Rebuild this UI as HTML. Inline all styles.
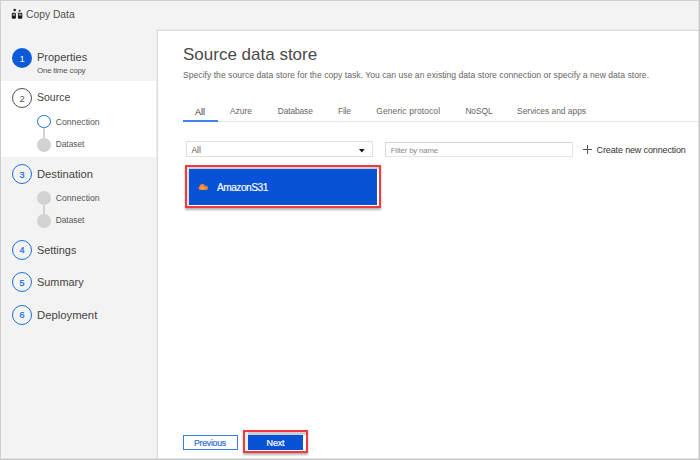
<!DOCTYPE html>
<html><head><meta charset="utf-8">
<style>
*{box-sizing:border-box;margin:0;padding:0}
html,body{width:700px;height:460px;overflow:hidden;background:#f3f3f3;font-family:"Liberation Sans",sans-serif;color:#333}
.abs{position:absolute}
.t{position:absolute;white-space:nowrap;line-height:1}
.circ{position:absolute;border-radius:50%;box-sizing:border-box}
.num{position:absolute;width:20px;text-align:center;line-height:1;font-size:9px;font-weight:normal;-webkit-text-stroke:0.25px currentColor}
.lbl{font-size:11px;color:#444}
.sub{font-size:8.6px;color:#555}
.disc{position:absolute;left:37px;width:14px;height:14px;border-radius:50%;background:#d2d2d2}
.vline{position:absolute;left:43.2px;width:1.4px;background:#d2d2d2}
.tab{position:absolute;top:107.1px;font-size:8.4px;color:#666;line-height:1;white-space:nowrap}
</style></head><body>
<!-- frame borders -->
<div class="abs" style="left:0;top:0;width:700px;height:1px;background:#cfcfcf"></div>
<div class="abs" style="left:0;top:0;width:1px;height:460px;background:#cfcfcf"></div>
<div class="abs" style="left:699px;top:0;width:1px;height:460px;background:#c6c6c6"></div>
<div class="abs" style="left:698px;top:0;width:1px;height:460px;background:#e2e2e2"></div>
<div class="abs" style="left:0;top:459px;width:700px;height:1px;background:#c6c6c6"></div>
<div class="abs" style="left:0;top:458px;width:699px;height:1px;background:#e2e2e2"></div>

<!-- title -->
<svg class="abs" style="left:11px;top:8px" width="13" height="12" viewBox="0 0 13 12">
<circle cx="3.7" cy="2" r="1.25" fill="#1a1a1a"/><circle cx="8.6" cy="2.7" r="1.05" fill="#333"/><circle cx="6.2" cy="4.6" r="0.7" fill="#aaa"/>
<rect x="0.8" y="4.8" width="4.1" height="5.9" rx="1" fill="#1a1a1a"/>
<rect x="1.6" y="5.6" width="2.5" height="2.1" fill="#9a9a9a"/>
<rect x="6.9" y="4.8" width="4.4" height="5.9" rx="1" fill="#1a1a1a"/>
<rect x="7.7" y="5.6" width="2.8" height="2.1" fill="#9a9a9a"/>
</svg>
<div class="t" style="left:26px;top:10.2px;font-size:10.3px;color:#505050">Copy Data</div>

<!-- sidebar white source section -->
<div class="abs" style="left:1px;top:81.4px;width:156px;height:76px;background:#fff"></div>
<!-- sidebar right line -->
<div class="abs" style="left:156px;top:30px;width:1px;height:428px;background:#ebebeb"></div>
<div class="abs" style="left:157px;top:30px;width:1px;height:428px;background:#dcdcdc"></div>

<!-- step 1 -->
<div class="circ" style="left:12px;top:48px;width:20px;height:20px;background:#0b5bd9"></div>
<div class="num" style="left:12px;top:54.3px;color:#fff;-webkit-text-stroke:0;font-size:9.4px">1</div>
<div class="t lbl" style="left:37px;top:52px">Properties</div>
<div class="t" style="left:37px;top:66.8px;font-size:8px;letter-spacing:-0.25px;color:#555">One time copy</div>

<!-- step 2 -->
<div class="circ" style="left:12px;top:87.6px;width:20px;height:20px;border:1.6px solid #505050"></div>
<div class="num" style="left:12px;top:93.8px;color:#555;-webkit-text-stroke:0;font-size:9.4px">2</div>
<div class="t lbl" style="left:37px;top:92px;font-size:10.5px">Source</div>
<div class="circ" style="left:37px;top:114.6px;width:13.8px;height:13.8px;border:1.7px solid #1a6fe0"></div>
<div class="vline" style="top:128.3px;height:10px"></div>
<div class="disc" style="top:138px;width:13.8px;height:13.8px"></div>
<div class="t sub" style="left:55.7px;top:117.5px;font-size:8.7px">Connection</div>
<div class="t sub" style="left:55.7px;top:140px;font-size:8.35px">Dataset</div>

<!-- step 3 -->
<div class="circ" style="left:12px;top:164.2px;width:20px;height:20px;border:1.7px solid #1a6fe0"></div>
<div class="num" style="left:12px;top:170.6px;color:#1a6fe0">3</div>
<div class="t lbl" style="left:37px;top:168.6px;font-size:11.2px">Destination</div>
<div class="disc" style="top:191px;width:13.8px;height:13.8px"></div>
<div class="vline" style="top:204.6px;height:10px"></div>
<div class="disc" style="top:214.2px;width:13.8px;height:13.8px"></div>
<div class="t sub" style="left:55.7px;top:194.3px;font-size:8.7px">Connection</div>
<div class="t sub" style="left:55.7px;top:216px;font-size:8.35px">Dataset</div>

<!-- step 4-6 -->
<div class="circ" style="left:12px;top:240px;width:20px;height:20px;border:1.7px solid #1a6fe0"></div>
<div class="num" style="left:12px;top:246.4px;color:#1a6fe0">4</div>
<div class="t lbl" style="left:37px;top:244.9px;font-size:10.9px">Settings</div>
<div class="circ" style="left:12px;top:272.4px;width:20px;height:20px;border:1.7px solid #1a6fe0"></div>
<div class="num" style="left:12px;top:278.8px;color:#1a6fe0">5</div>
<div class="t lbl" style="left:37px;top:277px;font-size:10.9px">Summary</div>
<div class="circ" style="left:12px;top:305px;width:20px;height:20px;border:1.7px solid #1a6fe0"></div>
<div class="num" style="left:12px;top:311.4px;color:#1a6fe0">6</div>
<div class="t lbl" style="left:37px;top:309.7px;font-size:11.3px">Deployment</div>

<!-- main panel -->
<div class="abs" style="left:158px;top:31px;width:540px;height:427px;background:#fff"></div>
<div class="abs" style="left:157px;top:30px;width:541px;height:1px;background:#dcdcdc"></div>
<div class="abs" style="left:156px;top:29px;width:542px;height:1px;background:#ebebeb"></div>

<div class="t" style="left:183px;top:46.3px;font-size:17px;color:#4a4a4a">Source data store</div>
<div class="t" style="left:183px;top:71.2px;font-size:8.6px;letter-spacing:0.018px;color:#666">Specify the source data store for the copy task. You can use an existing data store connection or specify a new data store.</div>

<!-- tabs -->
<div class="tab" style="left:195px;top:107.5px;color:#333;font-size:9px">All</div>
<div class="tab" style="left:230px">Azure</div>
<div class="tab" style="left:277.7px;letter-spacing:-0.1px">Database</div>
<div class="tab" style="left:338px;letter-spacing:-0.2px">File</div>
<div class="tab" style="left:376.3px;letter-spacing:0.15px">Generic protocol</div>
<div class="tab" style="left:465.4px;letter-spacing:-0.07px">NoSQL</div>
<div class="tab" style="left:517.1px">Services and apps</div>
<div class="abs" style="left:183px;top:121px;width:515px;height:1px;background:#e6e6e6"></div>
<div class="abs" style="left:183px;top:120px;width:35px;height:2px;background:#4382e6"></div>

<!-- dropdown -->
<div class="abs" style="left:185.5px;top:141px;width:187.6px;height:16px;border:1px solid #e0e0e0"></div>
<div class="t" style="left:191.4px;top:146.2px;font-size:8.5px;color:#555">All</div>
<svg class="abs" style="left:359.2px;top:148.7px" width="6" height="4" viewBox="0 0 6 4"><path d="M0 0h5.6l-2.8 3.4z" fill="#111"/></svg>

<!-- filter -->
<div class="abs" style="left:385px;top:142px;width:187.5px;height:14.5px;border:1px solid #d6d6d6;border-bottom-color:#e4e4e4;border-right-color:#e4e4e4"></div>
<div class="t" style="left:390.7px;top:146.8px;font-size:7.8px;letter-spacing:-0.15px;color:#888">Filter by name</div>

<!-- create new -->
<div class="abs" style="left:583px;top:149.2px;width:9.4px;height:1px;background:#555"></div>
<div class="abs" style="left:587.2px;top:145px;width:1px;height:9.3px;background:#555"></div>
<div class="t" style="left:596.6px;top:145.6px;font-size:9px;letter-spacing:-0.14px;color:#333">Create new connection</div>

<!-- Amazon tile -->
<div class="abs" style="left:185px;top:165px;width:196px;height:43px;border:2px solid #f03a3c;box-shadow:0 1.5px 2px rgba(0,0,0,0.3)"></div>
<div class="abs" style="left:187px;top:167px;width:192px;height:2px;background:#cfcfcf"></div>
<div class="abs" style="left:187px;top:167px;width:2px;height:39px;background:#e2e2e2"></div>
<div class="abs" style="left:189px;top:169px;width:188px;height:35.6px;background:#0752d6"></div>
<svg class="abs" style="left:198px;top:183px" width="11" height="8" viewBox="0 0 11 8">
<circle cx="4.3" cy="3.7" r="2.6" fill="#f7892b"/><circle cx="2.7" cy="5" r="2" fill="#f7892b"/><circle cx="7.8" cy="4.9" r="2.1" fill="#f7892b"/><rect x="2.7" y="4.5" width="5.1" height="2.5" fill="#f7892b"/>
<ellipse cx="4.8" cy="5" rx="1.8" ry="1.1" fill="#fbae6b"/>
</svg>
<div class="t" style="left:216.9px;top:183.4px;font-size:10.2px;letter-spacing:-0.5px;color:#fff;-webkit-text-stroke:0.15px #fff">AmazonS31</div>

<!-- buttons -->
<div class="abs" style="left:183px;top:435px;width:55px;height:15px;border:1px solid #3b7de0"></div>
<div class="t" style="left:194px;top:438.6px;font-size:8.8px;letter-spacing:-0.3px;color:#2f6fd8;-webkit-text-stroke:0.2px #2f6fd8">Previous</div>

<div class="abs" style="left:243px;top:430px;width:65px;height:23px;border:2px solid #f03a3c;box-shadow:0 1.5px 2px rgba(0,0,0,0.3)"></div>
<div class="abs" style="left:245px;top:432px;width:61px;height:2.5px;background:#cfcfcf"></div>
<div class="abs" style="left:245px;top:432px;width:2.5px;height:19px;background:#eceeec"></div>
<div class="abs" style="left:247.7px;top:434.8px;width:55.3px;height:15px;background:#0752d6"></div>
<div class="t" style="left:266.6px;top:438.7px;font-size:9px;letter-spacing:-0.2px;color:#fff;-webkit-text-stroke:0.2px #fff">Next</div>

</body></html>
